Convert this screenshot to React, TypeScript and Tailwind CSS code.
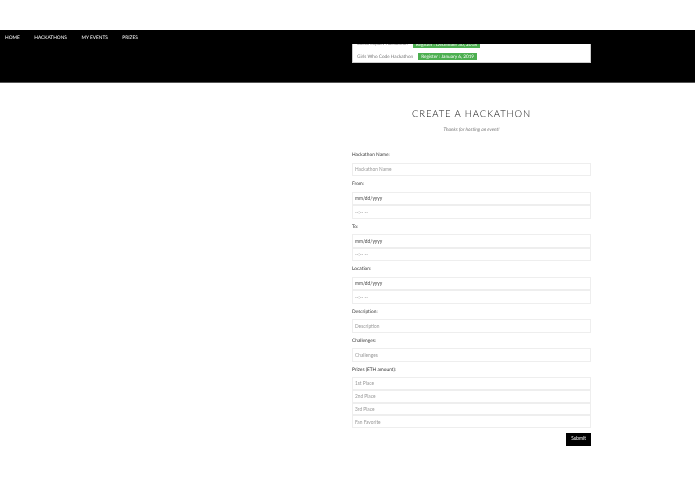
import React from 'react';

const Field: React.FC<{ placeholder: string; dark?: boolean; className?: string }> = ({ placeholder, dark, className = 'h-[13.5px]' }) => (
    <input
        readOnly
        placeholder={placeholder}
        className={`block w-full ${className} border border-[#eeeeee] bg-white px-[2px] text-[4.8px] outline-none ${dark ? 'placeholder:text-[#444]' : 'placeholder:text-[#999]'}`}
    />
);

const Label: React.FC<{ children: React.ReactNode }> = ({ children }) => (
    <div className="h-[15.5px] pt-[1px] text-[4.8px] leading-[14px] text-[#333]">{children}</div>
);

const NAV = ['HOME', 'HACKATHONS', 'MY EVENTS', 'PRIZES'];

export default function App() {
    return (
        <div className="min-h-[494px] pt-[30px] font-['Lato','Open_Sans',sans-serif] [text-rendering:geometricPrecision] [will-change:transform]">
            <header className="relative h-[53px] border-b border-[#555] bg-black">
                <nav className="flex gap-[14.5px] pl-[5px] pt-[5px] text-[4.8px] leading-[7px] text-white">
                    {NAV.map(n => <span key={n}>{n}</span>)}
                </nav>
                <div className="absolute left-[352px] top-[14px] h-[19px] w-[239px] overflow-hidden border border-t-0 border-[#ccc] bg-white text-[4.7px] text-[#777]">
                    <div className="-mt-[5.5px] flex h-[11px] items-center gap-[5px] pl-[4px]">
                        <span>Social Impact Hackathon</span>
                        <span className="bg-[#4caf50] px-[3px] leading-[7px] text-white">Register : December 30, 2018</span>
                    </div>
                    <div className="mt-[1.5px] flex h-[11px] items-center gap-[5px] pl-[4px]">
                        <span>Girls Who Code Hackathon</span>
                        <span className="bg-[#4caf50] px-[3px] leading-[7px] text-white">Register : January 6, 2019</span>
                    </div>
                </div>
            </header>
            <main className="ml-[352px] w-[239px] pt-[25.5px]">
                <h1 className="text-center text-[9.5px] leading-[12px] font-light tracking-[0.85px] text-[#111]">CREATE A HACKATHON</h1>
                <p className="mt-[5px] text-center text-[4.8px] leading-[8px] italic text-[#777]">Thanks for hosting an event!</p>
                <div className="mt-[13.5px]">
                    <Label>Hackathon Name:</Label>
                    <Field placeholder="Hackathon Name" />
                    <Label>From:</Label>
                    <Field placeholder="mm/dd/yyyy" dark />
                    <Field placeholder="--:-- --" />
                    <Label>To:</Label>
                    <Field placeholder="mm/dd/yyyy" dark />
                    <Field placeholder="--:-- --" />
                    <Label>Location:</Label>
                    <Field placeholder="mm/dd/yyyy" dark />
                    <Field placeholder="--:-- --" />
                    <Label>Description:</Label>
                    <Field placeholder="Description" />
                    <Label>Challenges:</Label>
                    <Field placeholder="Challenges" />
                    <Label>Prizes (ETH amount):</Label>
                    <Field placeholder="1st Place" className="h-[12.75px]" />
                    <Field placeholder="2nd Place" className="h-[12.75px]" />
                    <Field placeholder="3rd Place" className="h-[12.75px]" />
                    <Field placeholder="Fan Favorite" className="h-[12.75px]" />
                </div>
                <div className="mt-[4.5px] flex justify-end">
                    <button className="h-[13px] w-[25px] bg-black text-[4.8px] text-white">Submit</button>
                </div>
            </main>
        </div>
    );
}
